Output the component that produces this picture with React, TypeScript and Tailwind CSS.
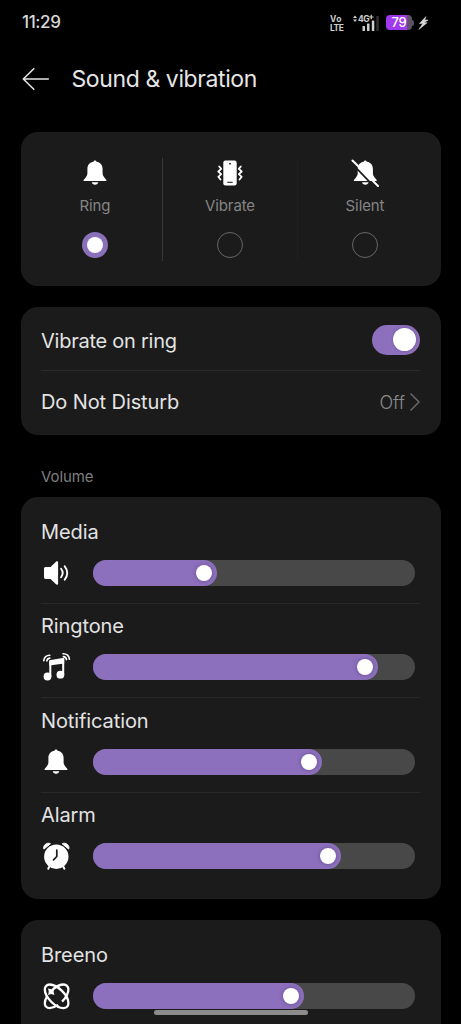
import React from "react";

interface SliderRowProps {
  label: string;
  icon: React.ReactNode;
  fill: number;
}

function BellShape() {
  return (
    <>
      <path d="M12 0.4c.9 0 1.4.6 1.5 1.3 3.7.6 6.1 3.3 6.1 7v4.6c0 1.600 .6 2.700 1.700 4.100l1.900 2.300c.5.7.3 1.300-.6 1.300H1.400c-.9 0-1.100-.6-.6-1.300l1.900-2.300c1.100-1.400 1.700-2.500 1.700-4.100V8.700c0-3.700 2.400-6.400 6.100-7C10.600 1 11.100.4 12 .4z" />
      <path d="M8.700 22.300h6.600c-.3 1.600-1.600 2.500-3.300 2.500s-3-.9-3.300-2.500z" />
    </>
  );
}

function BellIcon() {
  return (
    <svg className="h-[26px] w-6" viewBox="0 0 24 26" fill="white">
      <BellShape />
    </svg>
  );
}

function BellOffIcon() {
  return (
    <svg className="h-7 w-7" viewBox="0 0 28 28" fill="white">
      <g transform="translate(2.300 1)">
        <BellShape />
      </g>
      <path d="M-0.500 3L24.500 29" stroke="#1b1b1b" strokeWidth="1.800" />
      <path d="M1.500 1.500L27 27" stroke="white" strokeWidth="2" strokeLinecap="round" />
    </svg>
  );
}

function PhoneVibrateIcon() {
  return (
    <svg className="h-[26px] w-[26px]" viewBox="0 0 26 26" fill="none">
      <rect x="6.300" y="0.500" width="13.400" height="25" rx="2.200" fill="white" />
      <circle cx="13" cy="3.700" r="0.900" fill="#1b1b1b" />
      <path d="M10.300 22.300h5.400" stroke="#1b1b1b" strokeWidth="1.100" />
      <path d="M2.200 6.500l2 2.400-2.900 2.600 2.900 2.700-2.900 2.600 2.200 2.700" stroke="white" strokeWidth="1.800" strokeLinejoin="round" strokeLinecap="round" />
      <path d="M23.800 6.500l-2 2.400 2.900 2.600-2.900 2.700 2.900 2.600-2.200 2.700" stroke="white" strokeWidth="1.800" strokeLinejoin="round" strokeLinecap="round" />
    </svg>
  );
}

function SpeakerIcon() {
  return (
    <svg className="h-[30px] w-[30px]" viewBox="0 0 30 30" fill="none">
      <path d="M4.700 9h4.800l5.500-5.300c.9-.8 2.100-.4 2.100.8v21c0 1.200-1.200 1.600-2.100.8L9.500 21H4.700c-1 0-1.700-.7-1.700-1.700v-8.600C3 9.700 3.700 9 4.700 9z" fill="white" />
      <path d="M20.100 10.800c1.900 2.500 1.900 5.900 0 8.400" stroke="white" strokeWidth="1.900" strokeLinecap="round" />
      <path d="M23.700 8.300c3.400 4 3.400 9.400 0 13.400" stroke="white" strokeWidth="1.900" strokeLinecap="round" />
    </svg>
  );
}

function MusicIcon() {
  return (
    <svg className="h-[30px] w-[30px]" viewBox="0 0 30 30" fill="none">
      <path d="M8.300 8.300l14.900-2.600v5.700L8.300 13.600z" fill="white" />
      <path d="M9.300 9v16M22.200 7v16" stroke="white" strokeWidth="2" />
      <circle cx="6.500" cy="24.500" r="3.900" fill="white" />
      <circle cx="19.400" cy="22.700" r="3.900" fill="white" />
      <path d="M2.800 8.700c.3-3.200 2.700-5.400 6-5.500M5.900 9c.1-1.700 1.200-2.700 2.900-2.900" stroke="white" strokeWidth="1.600" strokeLinecap="round" />
      <path d="M22 1.700c3.700 0 6.100 2.200 6.400 5.600M22.300 4.600c1.800.1 3 1.200 3.200 3" stroke="white" strokeWidth="1.600" strokeLinecap="round" />
    </svg>
  );
}

function AlarmIcon() {
  return (
    <svg className="h-[30px] w-[30px]" viewBox="0 0 30 30" fill="none">
      <circle cx="15.300" cy="15.700" r="12.200" fill="white" />
      <path d="M2.900 8.100c-1.400-3.600 3.300-7.400 6.500-5.300z" fill="white" stroke="white" strokeLinejoin="round" />
      <path d="M27.700 8.100c1.400-3.600-3.300-7.400-6.500-5.300z" fill="white" stroke="white" strokeLinejoin="round" />
      <path d="M8.700 25l-1.500 2.700M21.900 25l1.500 2.700" stroke="white" strokeWidth="2" strokeLinecap="round" />
      <path d="M15.800 9.200v6.300l-3.300 3.400" stroke="#1b1b1b" strokeWidth="1.700" strokeLinecap="round" strokeLinejoin="round" />
    </svg>
  );
}

function BreenoIcon() {
  return (
    <svg className="h-[30px] w-[30px]" viewBox="0 0 30 30" fill="none" stroke="white" strokeWidth="2.300">
      <g transform="translate(15.600 15.300)">
        <path d="M-7-11.800C1-11.800 11.800-1 11.800 7A4.800 4.800 0 0 1 7 11.800C-1 11.800-11.800 1-11.800-7A4.800 4.800 0 0 1-7-11.800z" />
        <path
          d="M7-11.800A4.800 4.800 0 0 1 11.800-7C11.800 1 1 11.800-7 11.800A4.800 4.800 0 0 1-11.800 7C-11.800-1-1-11.800 7-11.800z"
          pathLength="100"
          strokeDasharray="30 7 34 12 17 0"
        />
        <path d="M-8.600-7.800l3.200.8 3.200-.8-.8 3.200.8 3.200-3.200-.8-3.200.8.8-3.200z" fill="white" stroke="none" />
      </g>
    </svg>
  );
}

function StatusBar() {
  return (
    <div className="flex h-[45px] items-center justify-between pr-[32px] pl-[22px]">
      <span className="text-[17px] font-medium tracking-[-0.4px] text-[#d8d8d8]">11:29</span>
      <div className="flex items-center">
        <svg className="h-[20px] w-[15px]" viewBox="0 0 15 20" fill="#cfcfcf" fontSize="8.500" fontWeight="700">
          <text x="0" y="8.500" textLength="11.500">Vo</text>
          <text x="0" y="17.500" textLength="14">LTE</text>
        </svg>
        <svg className="ml-[7px] h-[20px] w-[28px]" viewBox="0 0 28 20">
          <path d="M1 5L3 2.500 5 5zM1 6.500L3 9l2-2.500z" fill="#cfcfcf" />
          <text x="6" y="8.800" fill="#cfcfcf" fontSize="8.500" fontWeight="700" letterSpacing="-0.500">4G</text>
          <path d="M17 4h4.500M19.250 1.800v4.500" stroke="#cfcfcf" strokeWidth="1.200" />
          <rect x="10.500" y="13" width="2.500" height="5" rx="0.500" fill="#cfcfcf" />
          <rect x="15" y="10.500" width="2.500" height="7.500" rx="0.500" fill="#cfcfcf" />
          <rect x="19.800" y="7.500" width="2.500" height="10.500" rx="0.500" fill="#cfcfcf" />
          <rect x="24.300" y="3" width="2.500" height="15" rx="0.500" fill="#303030" />
        </svg>
        <div className="ml-[6px] flex h-[15px] w-[26px] items-center justify-center rounded-[4px] bg-linear-to-r from-[#a238ee] from-80% to-[#5c5263] to-80% text-[13px] font-medium tracking-[-0.3px] text-white">
          79
        </div>
        <div className="h-[6px] w-[2px] rounded-r-sm bg-[#55505a]" />
        <svg className="ml-[4px] h-[16px] w-[11px]" viewBox="0 0 12 16" fill="#d8d8d8" stroke="#d8d8d8" strokeWidth="0.600">
          <path d="M8.700 1L1.500 8.600h3.700L1 15l9-7.300H6.500L11 4.800H7.300z" />
        </svg>
      </div>
    </div>
  );
}

function ModeOption({ label, icon, selected }: { label: string; icon: React.ReactNode; selected?: boolean }) {
  return (
    <div className="flex w-[135px] flex-col items-center">
      <div className="flex h-7 items-center justify-center">{icon}</div>
      <span className="mt-[9px] text-[15px] leading-5 tracking-[-0.1px] text-[#858585]">{label}</span>
      {selected ? (
        <div className="mt-[16px] flex size-[26px] items-center justify-center rounded-full bg-[#8a70b8]">
          <div className="size-4 rounded-full bg-white" />
        </div>
      ) : (
        <div className="mt-[16px] size-[26px] rounded-full border-[1.5px] border-[#666666]" />
      )}
    </div>
  );
}

function SliderRow({ label, icon, fill }: SliderRowProps) {
  return (
    <div>
      <h3 className="text-[20px] leading-6 tracking-[-0.1px] text-[#e3e3e3]">{label}</h3>
      <div className="mt-[14px] flex h-[30px] items-center">
        {icon}
        <div className="ml-[21.500px] h-[26px] w-[322px] rounded-full bg-[#484848]">
          <div
            className="flex h-full items-center justify-end rounded-full bg-[#8d70bd] pr-[5px]"
            style={{ width: fill }}
          >
            <div className="size-4 rounded-full bg-white shadow-[0_0_4px_rgba(60,40,90,0.5)]" />
          </div>
        </div>
      </div>
    </div>
  );
}

const volumes = [
  { label: "Media", icon: <SpeakerIcon />, fill: 124 },
  { label: "Ringtone", icon: <MusicIcon />, fill: 285 },
  { label: "Notification", icon: <div className="flex w-[30px] justify-center"><BellIcon /></div>, fill: 229.5 },
  { label: "Alarm", icon: <AlarmIcon />, fill: 248 },
];

export default function App() {
  return (
    <div className="relative h-[1024px] w-[461px] overflow-hidden bg-black font-['Inter',sans-serif]">
      <StatusBar />

      {/* Header */}
      <header className="flex h-[68px] items-center pl-[22px]">
        <svg className="h-6 w-7" viewBox="0 0 28 24" fill="none" stroke="#e3e3e3" strokeWidth="1.600" strokeLinecap="round" strokeLinejoin="round">
          <path d="M26.300 12H1.300M11.800 1.700L1.300 12l10.500 10.300" />
        </svg>
        <h1 className="ml-[21.500px] pt-px text-[23px] tracking-[-0.400px] text-[#e6e6e6]">Sound &amp; vibration</h1>
      </header>

      {/* Ring mode */}
      <section className="mx-auto mt-[19.400px] flex h-[154px] w-[420px] rounded-[17px] bg-[#1b1b1b] px-[7px] pt-[26.500px]">
        <ModeOption label="Ring" icon={<BellIcon />} selected />
        <div className="-mt-[1px] -ml-px h-[103px] w-px bg-[#383838]" />
        <ModeOption label="Vibrate" icon={<PhoneVibrateIcon />} />
        <div className="-ml-px h-[101px] w-px bg-[#202020]" />
        <ModeOption label="Silent" icon={<BellOffIcon />} />
      </section>

      <section className="mx-auto mt-[20.600px] h-[128px] w-[420px] rounded-[17px] bg-[#1b1b1b] px-[20.500px] pt-[4px]">
        <div className="flex h-[60px] items-center justify-between border-b border-[#2b2b2b]">
          <span className="pt-px text-[20px] tracking-[-0.250px] text-[#e3e3e3]">Vibrate on ring</span>
          <div className="-mt-px flex h-[30px] w-[48px] items-center justify-end rounded-full bg-[#8d70bd] pr-1">
            <div className="size-[23px] rounded-full bg-white shadow-[0_0_3px_rgba(60,40,90,0.4)]" />
          </div>
        </div>
        <div className="flex h-[63px] items-center justify-between">
          <span className="text-[20px] tracking-[-0.100px] text-[#e3e3e3]">Do Not Disturb</span>
          <div className="flex items-center gap-[5px]">
            <span className="text-[18px] font-light text-[#8a8a8a]">Off</span>
            <svg className="h-[18px] w-[10px]" viewBox="0 0 10 18" fill="none" stroke="#6a6a6a" strokeWidth="1.500" strokeLinecap="round" strokeLinejoin="round">
              <path d="M1 1l8 8-8 8" />
            </svg>
          </div>
        </div>
      </section>

      <h2 className="mt-[32px] pl-[41px] text-[15px] leading-5 tracking-[-0.1px] text-[#7e7e7e]">Volume</h2>

      <section className="mx-auto mt-[10px] h-[402px] w-[420px] rounded-[17px] bg-[#1b1b1b] px-[20.500px] pt-[23px]">
        {volumes.map((item, index) => (
          <div key={item.label} className="h-[94.300px]">
            <SliderRow label={item.label} icon={item.icon} fill={item.fill} />
            {index < volumes.length - 1 && <div className="mt-[15px] h-px bg-[#282828]" />}
          </div>
        ))}
      </section>

      <section className="mx-auto mt-[21px] h-[160px] w-[420px] rounded-[17px] bg-[#1b1b1b] px-[20.500px] pt-[23px]">
        <SliderRow label="Breeno" icon={<BreenoIcon />} fill={211} />
      </section>

      {/* Gesture bar */}
      <div className="absolute top-[1010px] left-[154px] h-[5px] w-[154px] rounded-full bg-[#8c8c8c]" />
    </div>
  );
}
